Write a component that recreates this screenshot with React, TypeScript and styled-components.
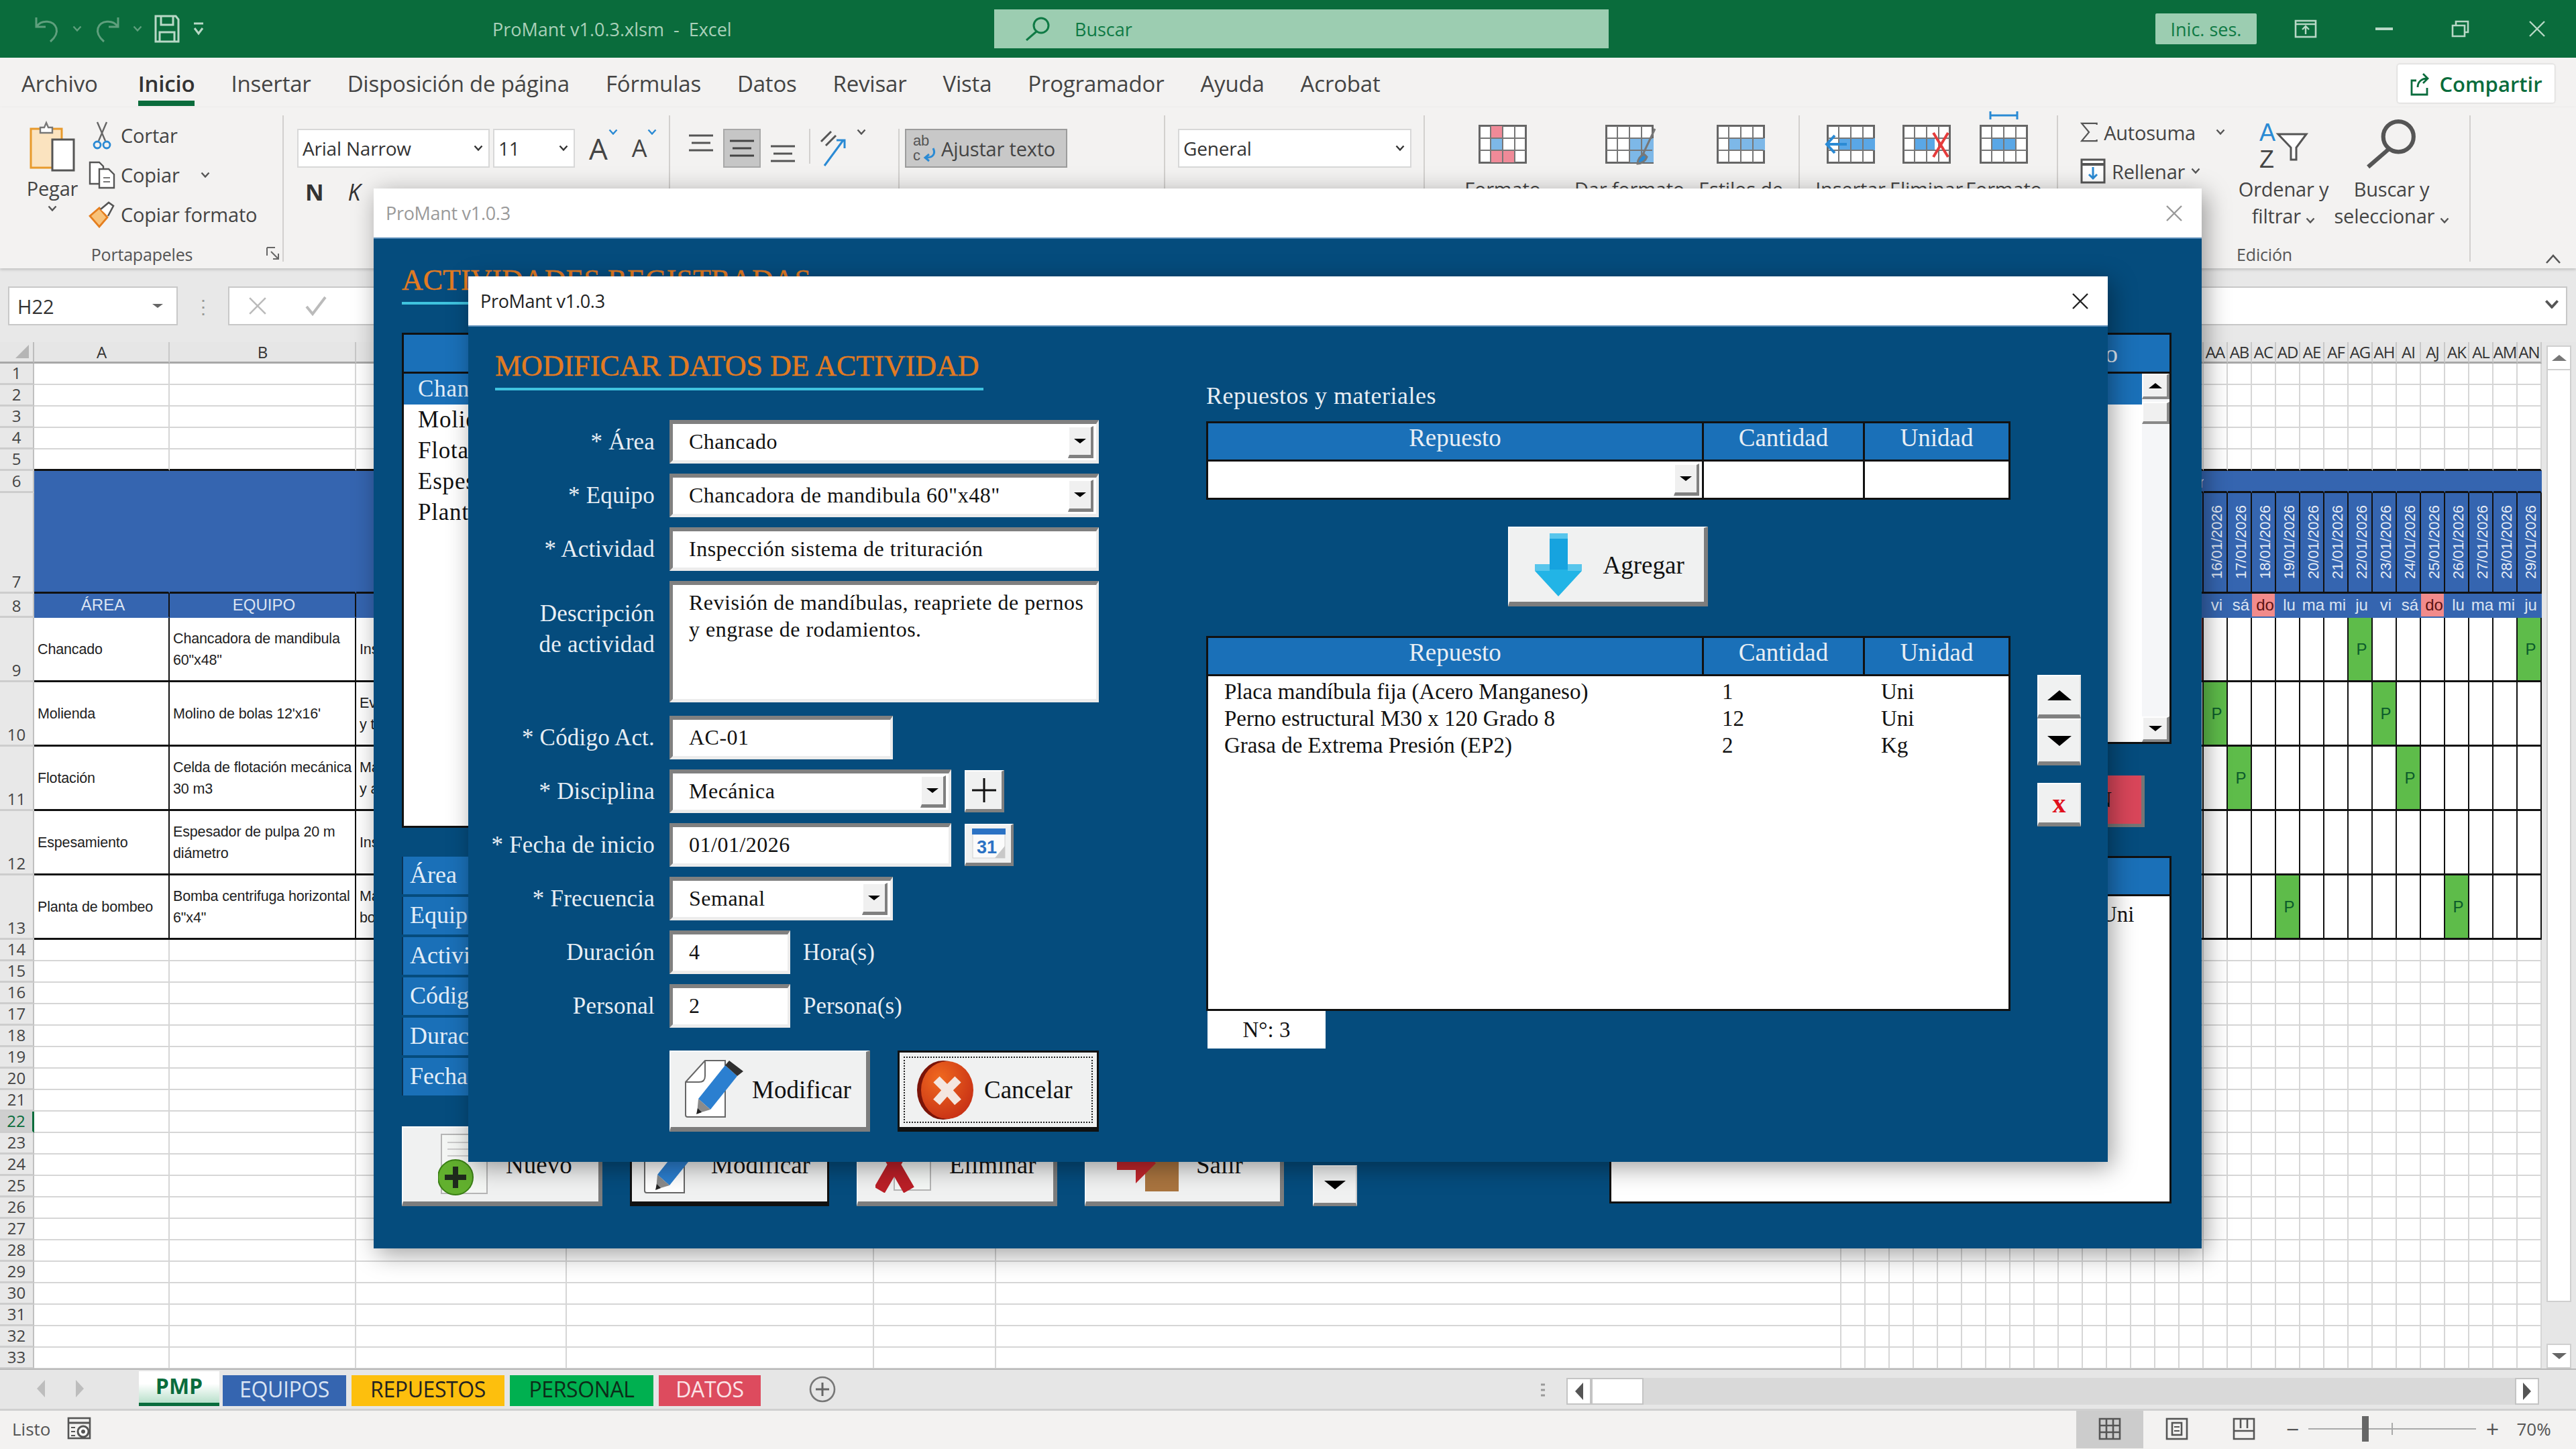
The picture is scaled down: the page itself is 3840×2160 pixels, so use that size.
import React from "react";
import styled, { createGlobalStyle } from "styled-components";

const UI = `"Open Sans", "Noto Sans", sans-serif`;
const SERIF = `"Liberation Serif", "Times New Roman", serif`;
const ARIAL = `"Liberation Sans", Arial, sans-serif`;
const GREEN = "#0a6c3c";
const NAVY = "#054c7d";
const BLUE = "#1a70b8";
const SHEET_BLUE = "#3565b0";
const GRID = "#d6d6d6";
const INK = "#111";

const GlobalStyle = createGlobalStyle`
  html, body { margin: 0; padding: 0; background: #fff; }
  * { box-sizing: border-box; }
`;

const Root = styled.div`
  position: relative;
  width: 3840px;
  height: 2160px;
  overflow: hidden;
  display: flex;
  flex-direction: column;
  font-family: ${UI};
  color: #444;
  background: #f3f2f1;
`;

/* title bar */
const TitleBar = styled.div`
  height: 86px;
  flex: none;
  display: flex;
  align-items: center;
  background: ${GREEN};
  color: #a9d0b9;
`;
const QuickAccess = styled.div`
  width: 734px;
  padding-left: 50px;
  display: flex;
  align-items: center;
  gap: 18px;
`;
const WindowName = styled.div`
  width: 748px;
  font-size: 27px;
  white-space: pre;
`;
const SearchBox = styled.div`
  width: 916px;
  height: 58px;
  background: #9ccdb1;
  color: #0f7a45;
  display: flex;
  align-items: center;
  gap: 36px;
  padding-left: 46px;
  font-size: 27px;
`;
const SignIn = styled.div`
  margin-left: 815px;
  width: 151px;
  height: 46px;
  background: #9ccdb1;
  color: #0f7a45;
  border-radius: 2px;
  font-size: 27px;
  display: flex;
  align-items: center;
  justify-content: center;
`;
const WindowButtons = styled.div`
  display: flex;
  align-items: center;
  margin-left: 56px;
  gap: 87px;
`;

/* menu */
const MenuBar = styled.div`
  height: 74px;
  flex: none;
  display: flex;
  padding-left: 32px;
  gap: 54px;
`;
const MenuTab = styled.div<{ $active?: boolean }>`
  height: 72px;
  padding-top: 17px;
  font-size: 33px;
  line-height: 44px;
  letter-spacing: -0.2px;
  white-space: nowrap;
  color: ${(p) => (p.$active ? "#333" : "#444")};
  font-weight: ${(p) => (p.$active ? 600 : 400)};
  border-bottom: 8px solid ${(p) => (p.$active ? GREEN : "transparent")};
  &:first-child {
    margin-right: 6px;
  }
`;
const ShareButton = styled.div`
  margin: 10px 32px 0 auto;
  width: 234px;
  height: 57px;
  background: #fff;
  border-radius: 3px;
  box-shadow: 0 0 3px rgba(0, 0, 0, 0.25);
  color: ${GREEN};
  font-size: 31px;
  font-weight: 600;
  display: flex;
  align-items: center;
  justify-content: center;
  gap: 10px;
`;

/* ribbon */
const Ribbon = styled.div`
  height: 240px;
  flex: none;
  display: flex;
  font-size: 29px;
  letter-spacing: -0.2px;
  box-shadow: 0 2px 4px rgba(0, 0, 0, 0.18);
  position: relative;
`;
const Group = styled.div<{ $w: number }>`
  width: ${(p) => p.$w}px;
  flex: none;
  position: relative;
  display: flex;
  flex-direction: column;
  &::after {
    content: "";
    position: absolute;
    right: 0;
    top: 12px;
    bottom: 10px;
    width: 2px;
    background: #d2d0ce;
  }
`;
const GroupBody = styled.div<{ $pl?: number; $pt?: number; $gap?: number }>`
  flex: 1;
  min-height: 0;
  display: flex;
  padding-left: ${(p) => p.$pl ?? 0}px;
  padding-top: ${(p) => p.$pt ?? 0}px;
  gap: ${(p) => p.$gap ?? 0}px;
`;
const GroupLabel = styled.div`
  height: 38px;
  margin-bottom: 2px;
  font-size: 25px;
  text-align: center;
  line-height: 38px;
  color: #555;
  position: relative;
`;
const Launcher = styled.span`
  position: absolute;
  right: 6px;
  top: 8px;
  display: flex;
`;
const CollapseSlot = styled.span`
  position: absolute;
  right: 22px;
  top: 218px;
  display: flex;
`;
const PasteColumn = styled.div`
  width: 132px;
  flex: none;
  display: flex;
  flex-direction: column;
  align-items: center;
  padding: 20px 0 0 24px;
  gap: 8px;
  line-height: 34px;
`;
const ClipColumn = styled.div`
  display: flex;
  flex-direction: column;
  padding-top: 12px;
`;
const ClipItem = styled.div`
  height: 59px;
  display: flex;
  align-items: center;
  gap: 8px;
  white-space: nowrap;
`;
const IconSlot = styled.span<{ $w: number }>`
  width: ${(p) => p.$w}px;
  display: flex;
  justify-content: center;
  flex: none;
`;
const FontColumn = styled.div`
  display: flex;
  flex-direction: column;
  padding: 32px 0 0 20px;
`;
const ControlRow = styled.div`
  display: flex;
  align-items: center;
  gap: 5px;
`;
const Combo = styled.div<{ $w: number }>`
  width: ${(p) => p.$w}px;
  height: 58px;
  background: #fff;
  border: 2px solid #d8d8d8;
  padding: 0 8px 0 6px;
  display: flex;
  align-items: center;
  justify-content: space-between;
  color: #333;
  font-size: 28px;
  white-space: nowrap;
`;
const GrowLetter = styled.span<{ $size: number }>`
  font-size: ${(p) => p.$size}px;
  line-height: 58px;
  color: #444;
  margin-left: 16px;
  display: flex;
  align-items: flex-start;
  gap: 1px;
`;
const BoldRow = styled.div`
  display: flex;
  align-items: center;
  gap: 36px;
  padding: 12px 0 0 12px;
  height: 60px;
  font-size: 34px;
  color: #333;
`;
const AlignCell = styled.div<{ $on?: boolean; $w: number; $v?: string }>`
  width: ${(p) => p.$w}px;
  height: 58px;
  display: flex;
  align-items: ${(p) => p.$v ?? "center"};
  justify-content: center;
  padding: 6px 0;
  background: ${(p) => (p.$on ? "#c6c6c6" : "transparent")};
  border: 2px solid ${(p) => (p.$on ? "#a8a8a8" : "transparent")};
`;
const VRule = styled.span<{ $h: number; $ml: number }>`
  width: 2px;
  height: ${(p) => p.$h}px;
  background: #d2d0ce;
  margin-left: ${(p) => p.$ml}px;
`;
const WrapToggle = styled.div`
  width: 242px;
  height: 58px;
  background: #c8c8c8;
  border: 2px solid #9c9c9c;
  color: #444;
  display: flex;
  align-items: center;
  gap: 4px;
  padding-left: 8px;
  white-space: nowrap;
  font-size: 29px;
`;
const BigAction = styled.div<{ $w: number; $mr?: number }>`
  width: ${(p) => p.$w}px;
  margin-right: ${(p) => p.$mr ?? 0}px;
  flex: none;
  display: flex;
  flex-direction: column;
  align-items: center;
`;
const ActionIcon = styled.div<{ $h: number }>`
  height: ${(p) => p.$h}px;
  display: flex;
  align-items: flex-end;
  justify-content: center;
`;
const ActionText = styled.div<{ $mt: number }>`
  margin-top: ${(p) => p.$mt}px;
  text-align: center;
  line-height: 40px;
  white-space: nowrap;
`;
const SumColumn = styled.div`
  width: 270px;
  padding-left: 33px;
  display: flex;
  flex-direction: column;
`;
const SumRow = styled.div`
  height: 58px;
  display: flex;
  align-items: center;
  gap: 9px;
  white-space: nowrap;
`;

/* formula bar */
const FormulaBar = styled.div`
  height: 110px;
  flex: none;
  background: #e8e8e8;
  display: flex;
  align-items: flex-start;
  padding: 27px 0 0 12px;
`;
const NameBox = styled.div`
  width: 253px;
  height: 58px;
  background: #fff;
  border: 2px solid #c8c8c8;
  padding: 0 20px 0 12px;
  display: flex;
  align-items: center;
  justify-content: space-between;
  font-size: 29px;
  color: #333;
`;
const Dots = styled.span`
  width: 75px;
  height: 58px;
  display: flex;
  align-items: center;
  justify-content: center;
  color: #999;
  font-size: 28px;
`;
const FormulaInput = styled.div`
  width: 3487px;
  height: 58px;
  background: #fff;
  border: 2px solid #c8c8c8;
  display: flex;
  align-items: center;
  padding-left: 28px;
  gap: 56px;
  position: relative;
`;
const FormulaDrop = styled.span`
  position: absolute;
  right: 10px;
  top: 17px;
  display: flex;
`;

/* sheet */
const SheetArea = styled.div`
  height: 1530px;
  flex: none;
  display: flex;
  background: #fff;
  overflow: hidden;
`;
const SheetGrid = styled.div`
  width: 3789px;
  flex: none;
  display: grid;
  grid-template-columns: 51px 202px 278px 314px 458px 182px 1260px repeat(29, 36px);
  grid-template-rows: 32px repeat(5, 32px) 33px 150px 36px repeat(5, 96px) repeat(20, 32px);
  font-family: ${ARIAL};
`;
const Corner = styled.div`
  background: #e6e6e6;
  border-right: 2px solid #bdbdbd;
  border-bottom: 3px solid #a8a8a8;
  display: flex;
  align-items: flex-end;
  justify-content: flex-end;
  padding: 0 6px 5px 0;
`;
const ColHead = styled.div`
  background: #e6e6e6;
  border-right: 2px solid #c8c8c8;
  border-bottom: 3px solid #a8a8a8;
  font-family: ${UI};
  font-size: 24px;
  letter-spacing: -1px;
  color: #333;
  display: flex;
  align-items: center;
  justify-content: center;
  overflow: hidden;
`;
const RowHead = styled.div<{ $current?: boolean }>`
  background: ${(p) => (p.$current ? "#cfcfcf" : "#e8e8e8")};
  color: ${(p) => (p.$current ? GREEN : "#444")};
  border-right: ${(p) => (p.$current ? `3px solid ${GREEN}` : "2px solid #c0c0c0")};
  border-bottom: 3px solid #cdcdcd;
  font-family: ${UI};
  font-size: 24px;
  line-height: 30px;
  display: flex;
  align-items: flex-end;
  justify-content: center;
`;
const Cell = styled.div<{ $bg?: string; $rb?: string; $bb?: string; $center?: boolean; $tone?: string }>`
  background: ${(p) => p.$bg ?? "#fff"};
  border-right: 2px solid ${(p) => p.$rb ?? GRID};
  border-bottom: ${(p) => (p.$bb === INK ? "3px" : "2px")} solid ${(p) => p.$bb ?? GRID};
  color: ${(p) => p.$tone ?? "#222"};
  font-size: 21.5px;
  line-height: 32px;
  padding: 0 0 0 5px;
  display: flex;
  align-items: center;
  justify-content: ${(p) => (p.$center ? "center" : "flex-start")};
  min-width: 0;
  position: relative;
`;
const CellText = styled.span`
  display: block;
  white-space: pre;
  letter-spacing: -0.15px;
`;
const MonthText = styled.span`
  position: absolute;
  left: 17px;
  top: 2px;
  white-space: nowrap;
  color: #dbe4f2;
  font-size: 23px;
  line-height: 30px;
`;
const DateText = styled.span`
  writing-mode: vertical-rl;
  transform: rotate(180deg);
  font-size: 22px;
  white-space: nowrap;
  color: #e6ecf6;
`;
const DayText = styled.span`
  font-size: 24px;
  white-space: nowrap;
`;
const VScroll = styled.div`
  width: 51px;
  background: #e6e6e6;
  padding: 5px 7px 0 7px;
  display: flex;
  flex-direction: column;
`;
const ScrollEnd = styled.div`
  height: 37px;
  background: #fff;
  border: 2px solid #cfcfcf;
  display: flex;
  align-items: center;
  justify-content: center;
`;
const ScrollTrack = styled.div`
  height: 1395px;
  background: #fff;
  border-left: 2px solid #cfcfcf;
  border-right: 2px solid #cfcfcf;
  border-bottom: 2px solid #cfcfcf;
`;
const ScrollGap = styled.div`
  height: 62px;
`;

/* sheet tabs */
const TabsBar = styled.div`
  height: 63px;
  flex: none;
  background: #e6e6e6;
  border-top: 2px solid #b8b8b8;
  border-bottom: 3px solid #d0d0d0;
  display: flex;
  align-items: flex-start;
  position: relative;
`;
const TabNav = styled.div`
  width: 207px;
  height: 56px;
  display: flex;
  align-items: center;
  padding-left: 55px;
  gap: 46px;
`;
const SheetTabs = styled.div`
  display: flex;
  gap: 8px;
  align-items: flex-start;
`;
const SheetTab = styled.div<{ $w: number; $bg: string; $tone: string }>`
  width: ${(p) => p.$w}px;
  height: 46px;
  margin-top: 8px;
  padding-bottom: 5px;
  background: ${(p) => p.$bg};
  color: ${(p) => p.$tone};
  font-size: 32px;
  letter-spacing: -0.4px;
  display: flex;
  align-items: center;
  justify-content: center;
  white-space: nowrap;
`;
const ActiveTab = styled.div`
  width: 120px;
  height: 52px;
  margin: 2px -3px 0 0;
  padding-bottom: 4px;
  background: linear-gradient(#fff 40%, #b9e0cb);
  border-bottom: 5px solid ${GREEN};
  color: ${GREEN};
  font-weight: 700;
  font-size: 32px;
  display: flex;
  align-items: center;
  justify-content: center;
`;
const AddSheet = styled.span`
  margin: 9px 0 0 72px;
  display: flex;
`;
const HScroll = styled.div`
  position: absolute;
  left: 2335px;
  top: 12px;
  width: 1450px;
  height: 40px;
  background: #d9d9d9;
  display: flex;
`;
const HScrollButton = styled.div<{ $w: number }>`
  width: ${(p) => p.$w}px;
  height: 40px;
  background: #fff;
  border: 2px solid #c4c4c4;
  display: flex;
  align-items: center;
  justify-content: center;
`;
const HScrollFill = styled.div`
  flex: 1;
`;
const SheetDots = styled.span`
  position: absolute;
  left: 2296px;
  top: 20px;
  display: flex;
`;

/* status bar */
const StatusBar = styled.div`
  height: 57px;
  flex: none;
  display: flex;
  align-items: center;
  padding: 0 0 3px 18px;
  font-size: 26px;
  color: #555;
`;
const ViewButtons = styled.div`
  margin-left: 2932px;
  display: flex;
  height: 57px;
`;
const ViewButton = styled.div<{ $on?: boolean }>`
  width: 100px;
  height: 57px;
  background: ${(p) => (p.$on ? "#cccccc" : "transparent")};
  display: flex;
  align-items: center;
  justify-content: center;
`;
const Zoomer = styled.div`
  display: flex;
  align-items: center;
  margin-left: 10px;
  gap: 12px;
`;
const ZoomSign = styled.span`
  font-size: 34px;
  color: #555;
  width: 24px;
  text-align: center;
`;
const ZoomTrack = styled.div`
  width: 250px;
  height: 2px;
  background: #aaa;
  position: relative;
`;
const ZoomThumb = styled.span`
  position: absolute;
  left: 80px;
  top: -18px;
  width: 10px;
  height: 38px;
  background: #666;
`;
const ZoomTick = styled.span`
  position: absolute;
  left: 124px;
  top: -8px;
  width: 2px;
  height: 18px;
  background: #aaa;
`;
const ZoomValue = styled.span`
  margin-left: 12px;
`;

/* windows */
const Window = styled.div<{ $x: number; $y: number; $w: number; $h: number }>`
  position: absolute;
  left: ${(p) => p.$x}px;
  top: ${(p) => p.$y}px;
  width: ${(p) => p.$w}px;
  height: ${(p) => p.$h}px;
  display: flex;
  flex-direction: column;
  overflow: hidden;
  background: ${NAVY};
  font-family: ${SERIF};
`;
const Shadow = styled.div<{ $x: number; $y: number; $w: number; $h: number }>`
  position: absolute;
  left: ${(p) => p.$x}px;
  top: ${(p) => p.$y}px;
  width: ${(p) => p.$w}px;
  height: ${(p) => p.$h}px;
  box-shadow: 6px 8px 34px rgba(0, 0, 0, 0.38);
`;
const WindowTitle = styled.div<{ $dim?: boolean }>`
  height: 75px;
  flex: none;
  background: #fff;
  border-bottom: 2px solid #5b8db8;
  padding: 0 28px 0 18px;
  display: flex;
  align-items: center;
  justify-content: space-between;
  font-family: ${UI};
  font-size: 27px;
  letter-spacing: -0.3px;
  color: ${(p) => (p.$dim ? "#9a9a9a" : "#222")};
`;
const Heading = styled.div`
  display: inline-block;
  width: fit-content;
  font-family: ${SERIF};
  font-size: 44px;
  line-height: 44px;
  color: #e27b22;
  -webkit-text-stroke: 0.5px #e27b22;
  white-space: nowrap;
  padding: 0 6px 10px 0;
  border-bottom: 4px solid #3fc3df;
`;

/* back window */
const BackBody = styled.div`
  flex: 1;
  padding: 40px 0 0 42px;
  display: flex;
  flex-direction: column;
  width: 2680px;
`;
const BackHeader = styled.div`
  margin-top: 42px;
  height: 61px;
  flex: none;
  background: ${BLUE};
  border: 3px solid ${INK};
  display: flex;
  align-items: center;
  justify-content: space-between;
  padding: 0 77px 0 300px;
  font-size: 38px;
  color: #e3eef8;
`;
const BackColumns = styled.div`
  display: flex;
  width: 2638px;
`;
const BackLeft = styled.div`
  width: 1440px;
  flex: none;
  display: flex;
  flex-direction: column;
`;
const BackRight = styled.div`
  width: 1198px;
  flex: none;
  display: flex;
  flex-direction: column;
`;
const BackList = styled.div`
  height: 677px;
  background: #fff;
  border-left: 3px solid ${INK};
  border-bottom: 3px solid ${INK};
  font-size: 35px;
  letter-spacing: 0.8px;
  color: #111;
`;
const BackListRow = styled.div<{ $on?: boolean }>`
  height: 46px;
  line-height: 46px;
  padding-left: 21px;
  background: ${(p) => (p.$on ? BLUE : "transparent")};
  color: ${(p) => (p.$on ? "#e3eef8" : "#111")};
  white-space: nowrap;
`;
const FieldStack = styled.div`
  margin-top: 43px;
  display: flex;
  flex-direction: column;
  gap: 4px;
`;
const FieldTag = styled.div`
  width: 300px;
  height: 56px;
  background: ${BLUE};
  border-left: 2px solid #0a3356;
  padding-left: 10px;
  line-height: 54px;
  font-size: 36px;
  color: #e3eef8;
`;
const BackButtons = styled.div`
  margin-top: 46px;
  display: flex;
  align-items: flex-end;
  gap: 41px;
`;
const BigButton = styled.button<{ $w: number; $h: number; $focus?: boolean; $gap?: number; $pl?: number }>`
  width: ${(p) => p.$w}px;
  height: ${(p) => p.$h}px;
  flex: none;
  position: relative;
  margin: 0;
  padding: 0 0 0 ${(p) => p.$pl ?? 0}px;
  background: #f0f1f1;
  border-style: solid;
  border-width: ${(p) => (p.$focus ? "3px 3px 7px 3px" : "2px 6px 7px 2px")};
  border-color: ${(p) => (p.$focus ? INK : "#fbfbfb #7d7d7d #7d7d7d #fbfbfb")};
  display: flex;
  align-items: center;
  justify-content: flex-start;
  gap: ${(p) => p.$gap ?? 0}px;
  font-family: ${SERIF};
  font-size: 37px;
  color: #111;
  white-space: nowrap;
`;
const FocusDots = styled.span`
  position: absolute;
  inset: 6px;
  border: 2px dotted #222;
  pointer-events: none;
`;
const BackListRight = styled.div`
  height: 552px;
  display: flex;
  background: #fff;
  border-right: 3px solid ${INK};
  border-bottom: 3px solid ${INK};
  flex: none;
`;
const RightRows = styled.div`
  flex: 1;
`;
const ListScroll = styled.div`
  width: 41px;
  flex: none;
  background: #f5f6f8;
  display: flex;
  flex-direction: column;
  justify-content: space-between;
  position: relative;
`;
const ListScrollBtn = styled.div<{ $thumb?: boolean }>`
  width: 41px;
  height: ${(p) => (p.$thumb ? 33 : 38)}px;
  background: #f0f0f0;
  border-style: solid;
  border-width: 2px 4px 4px 2px;
  border-color: #fff #888 #888 #fff;
  display: flex;
  align-items: center;
  justify-content: center;
`;
const ListScrollTop = styled.div`
  display: flex;
  flex-direction: column;
  gap: 4px;
`;
const RedButton = styled.div`
  margin: 47px 40px 0 auto;
  width: 400px;
  height: 77px;
  background: #d9465a;
  border-right: 5px solid #757575;
  border-bottom: 5px solid #757575;
  display: flex;
  align-items: center;
  justify-content: flex-end;
  font-size: 34px;
  color: #111;
  padding-right: 44px;
  white-space: nowrap;
`;
const DetailBox = styled.div`
  margin: 43px 0 0 auto;
  width: 838px;
  display: flex;
  flex-direction: column;
`;
const DetailHead = styled.div`
  height: 60px;
  background: ${BLUE};
  border: 3px solid ${INK};
`;
const DetailBody = styled.div`
  height: 458px;
  background: #fff;
  border: 3px solid ${INK};
  border-top: none;
  padding: 4px 0 0 730px;
  font-size: 33px;
  line-height: 46px;
  color: #111;
  white-space: nowrap;
`;

/* front window */
const FrontBody = styled.div`
  flex: 1;
  display: flex;
  padding-left: 40px;
`;
const FormSide = styled.div`
  width: 900px;
  flex: none;
  padding-top: 37px;
  display: flex;
  flex-direction: column;
`;
const Form = styled.div`
  margin-top: 44px;
  display: flex;
  flex-direction: column;
  gap: 15px;
`;
const FormRow = styled.div<{ $top?: boolean; $after?: number }>`
  display: flex;
  align-items: ${(p) => (p.$top ? "flex-start" : "center")};
  margin-bottom: ${(p) => p.$after ?? 0}px;
`;
const FieldLabel = styled.div<{ $top?: boolean }>`
  width: 238px;
  flex: none;
  margin-right: 22px;
  padding-top: ${(p) => (p.$top ? 26 : 0)}px;
  text-align: right;
  color: #e8eef4;
  font-size: 35px;
  letter-spacing: 0.2px;
  line-height: 46px;
  white-space: nowrap;
  display: flex;
  flex-direction: column;
  align-items: flex-end;
`;
const Field = styled.div<{ $w: number; $h?: number; $top?: boolean }>`
  width: ${(p) => p.$w}px;
  height: ${(p) => p.$h ?? 65}px;
  flex: none;
  background: #fff;
  border-style: solid;
  border-width: 6px 4px 5px 5px;
  border-color: #808080 #ececec #ececec #808080;
  padding-left: 24px;
  position: relative;
  color: #111;
  font-size: 32px;
  letter-spacing: 0.5px;
  line-height: ${(p) => (p.$top ? "40px" : "52px")};
  padding-top: ${(p) => (p.$top ? 6 : 0)}px;
  white-space: nowrap;
`;
const DropButton = styled.span<{ $w?: number }>`
  position: absolute;
  right: 4px;
  top: 3px;
  width: ${(p) => p.$w ?? 38}px;
  height: 48px;
  background: #f0f0f0;
  border-style: solid;
  border-width: 2px 4px 5px 2px;
  border-color: #fff #808080 #808080 #fff;
  display: flex;
  align-items: center;
  justify-content: center;
`;
const Tri = styled.span<{ $up?: boolean; $size: number; $tone?: string }>`
  display: block;
  width: 0;
  height: 0;
  border-left: ${(p) => p.$size}px solid transparent;
  border-right: ${(p) => p.$size}px solid transparent;
  ${(p) => (p.$up ? "border-bottom" : "border-top")}: ${(p) => p.$size * 0.85}px solid ${(p) => p.$tone ?? "#000"};
`;
const SideTool = styled.div<{ $w: number }>`
  width: ${(p) => p.$w}px;
  height: 63px;
  margin-left: 20px;
  background: #f0f1f1;
  border-style: solid;
  border-width: 2px 4px 5px 2px;
  border-color: #fff #808080 #808080 #fff;
  display: flex;
  align-items: center;
  justify-content: center;
`;
const UnitText = styled.div`
  margin-left: 19px;
  color: #e8eef4;
  font-size: 35px;
  white-space: nowrap;
`;
const FormButtons = styled.div`
  margin: 34px 0 0 260px;
  display: flex;
  gap: 41px;
`;
const PartsSide = styled.div`
  width: 1199px;
  flex: none;
  margin-left: 160px;
  display: flex;
  flex-direction: column;
`;
const PartsTitle = styled.div`
  height: 141px;
  padding-top: 80px;
  line-height: 46px;
  font-size: 36px;
  letter-spacing: 0.5px;
  color: #e8eef4;
  white-space: nowrap;
`;
const PartsGrid = styled.div`
  display: grid;
  grid-template-columns: 736px 237px 1fr;
  gap: 3px;
  background: ${INK};
  border: 3px solid ${INK};
`;
const PartsHead = styled.div`
  height: 54px;
  background: ${BLUE};
  color: #e8eef4;
  font-size: 37px;
  line-height: 44px;
  text-align: center;
`;
const PartsInput = styled.div`
  height: 54px;
  background: #fff;
  position: relative;
`;
const AddRow = styled.div`
  display: flex;
  justify-content: center;
  margin: 40px 0 44px -2px;
`;
const PartsBody = styled.div`
  height: 499px;
  background: #fff;
  border: 3px solid ${INK};
  border-top: none;
  padding-top: 3px;
`;
const PartRow = styled.div`
  display: grid;
  grid-template-columns: 739px 240px 1fr;
  height: 40px;
  line-height: 40px;
  font-size: 33px;
  color: #111;
  white-space: nowrap;
`;
const PartCell = styled.div<{ $pl: number }>`
  padding-left: ${(p) => p.$pl}px;
`;
const CountBox = styled.div`
  width: 176px;
  height: 56px;
  margin-left: 2px;
  background: #fff;
  color: #111;
  font-size: 33px;
  display: flex;
  align-items: center;
  justify-content: center;
`;
const SideTools = styled.div`
  margin-left: 40px;
  padding-top: 519px;
  width: 65px;
  flex: none;
  display: flex;
  flex-direction: column;
`;
const SquareTool = styled.div<{ $h: number; $after?: number }>`
  width: 65px;
  height: ${(p) => p.$h}px;
  margin-bottom: ${(p) => p.$after ?? 0}px;
  background: #f0f1f1;
  border-style: solid;
  border-width: 2px 2px 6px 2px;
  border-color: #fff #e0e0e0 #808080 #fff;
  display: flex;
  align-items: center;
  justify-content: center;
  color: #e0101c;
  font-size: 40px;
  font-weight: 700;
  line-height: 1;
`;
const SmallDrop = styled.div`
  width: 66px;
  height: 61px;
  margin-left: 2px;
  background: #f0f1f1;
  border-style: solid;
  border-width: 2px 2px 5px 2px;
  border-color: #fff #ccc #808080 #fff;
  display: flex;
  align-items: center;
  justify-content: center;
  flex: none;
`;

/* drawings */
const Chevron = ({ tone = "#555", w = 14 }: { tone?: string; w?: number }) => (
  <svg width={w} height={w * 0.65} viewBox="0 0 14 9">
    <path d="M1.5 1.5 7 7.5l5.5-6" fill="none" stroke={tone} strokeWidth="2.4" />
  </svg>
);
const UndoIcon = ({ flip }: { flip?: boolean }) => (
  <svg width="40" height="42" viewBox="0 0 40 42">
    <g transform={flip ? "translate(40 0) scale(-1 1)" : undefined}>
      <path d="M4 4v14h14M5 17C12 7 30 8 34 20c2 7-2 14-9 20" fill="none" stroke="#5f9f7d" strokeWidth="3" />
    </g>
  </svg>
);
const SaveIcon = () => (
  <svg width="38" height="42" viewBox="0 0 38 42">
    <path d="M2 2h30l4 5v33H2zM10 2v13h18V2M8 40V26h22v14" fill="none" stroke="#b8d8c6" strokeWidth="3" />
  </svg>
);
const CustomizeIcon = () => (
  <svg width="20" height="20" viewBox="0 0 20 20">
    <path d="M3 2h14M4 9l6 8 6-8" fill="none" stroke="#b8d8c6" strokeWidth="3" />
  </svg>
);
const LensIcon = ({ tone, w, h }: { tone: string; w: number; h: number }) => (
  <svg width={w} height={h} viewBox="0 0 38 36">
    <circle cx="24" cy="13" r="11" fill="none" stroke={tone} strokeWidth="3" />
    <path d="M17 22 2 35" stroke={tone} strokeWidth="3" />
  </svg>
);
const RibbonToggleIcon = () => (
  <svg width="34" height="28" viewBox="0 0 34 28">
    <rect x="2" y="2" width="30" height="24" fill="none" stroke="#b8d8c6" strokeWidth="2.6" />
    <path d="M2 7h30M17 22V11M12 15l5-5 5 5" fill="none" stroke="#b8d8c6" strokeWidth="2.4" />
  </svg>
);
const RestoreIcon = () => (
  <svg width="28" height="26" viewBox="0 0 28 26">
    <path d="M2 8h18v16H2zM7 8V2h18v16h-5" fill="none" stroke="#b8d8c6" strokeWidth="2.6" />
  </svg>
);
const CloseIcon = ({ tone, s = 26 }: { tone: string; s?: number }) => (
  <svg width={s} height={s} viewBox="0 0 26 26">
    <path d="M2 2l22 22M24 2 2 24" stroke={tone} strokeWidth="2.4" />
  </svg>
);
const ShareIcon = () => (
  <svg width="34" height="38" viewBox="0 0 34 38">
    <path d="M10 14H3v21h23v-10M12 24c0-8 6-13 14-13M20 4l7 7-7 7" fill="none" stroke={GREEN} strokeWidth="2.8" />
  </svg>
);
const PasteIcon = () => (
  <svg width="68" height="76" viewBox="0 0 68 76">
    <rect x="2" y="12" width="46" height="58" fill="#fbe3bf" stroke="#e89a2c" strokeWidth="3" />
    <path d="M16 18v-8h6l3-7 3 7h6v8z" fill="#fff" stroke="#777" strokeWidth="2.4" />
    <rect x="34" y="28" width="32" height="46" fill="#fff" stroke="#555" strokeWidth="3" />
  </svg>
);
const ScissorsIcon = () => (
  <svg width="30" height="44" viewBox="0 0 30 44">
    <path d="M8 2 20 30M22 2 10 30" stroke="#666" strokeWidth="2.4" fill="none" />
    <circle cx="8" cy="36" r="5" fill="none" stroke="#2a8ad4" strokeWidth="2.8" />
    <circle cx="22" cy="36" r="5" fill="none" stroke="#2a8ad4" strokeWidth="2.8" />
  </svg>
);
const CopyIcon = () => (
  <svg width="40" height="42" viewBox="0 0 40 42">
    <path d="M2 2h14l6 6v26H2z" fill="#fff" stroke="#555" strokeWidth="2.4" />
    <path d="M16 12h14l8 8v20H16z" fill="#fff" stroke="#555" strokeWidth="2.4" />
    <path d="M22 25h10M22 31h10" stroke="#777" strokeWidth="2.2" />
  </svg>
);
const BrushIcon = () => (
  <svg width="40" height="40" viewBox="0 0 40 40">
    <path d="M2 22 16 10l12 14-12 14z" fill="#f8c27a" stroke="#e57e1e" strokeWidth="2.8" />
    <path d="M18 12 30 2l7 5-8 15" fill="#fff" stroke="#555" strokeWidth="2.6" />
  </svg>
);
const LauncherIcon = () => (
  <svg width="20" height="20" viewBox="0 0 20 20">
    <path d="M1 1h12M1 1v12M7 7l11 11M18 10v8h-8" fill="none" stroke="#666" strokeWidth="2" />
  </svg>
);
const AlignIcon = ({ tone = "#555" }: { tone?: string }) => (
  <svg width="36" height="26" viewBox="0 0 36 26">
    <path d="M0 2h36M4 13h28M0 24h36" stroke={tone} strokeWidth="3" />
  </svg>
);
const AngleIcon = () => (
  <svg width="42" height="56" viewBox="0 0 42 56">
    <path d="M3 18 18 3M10 24 25 9" stroke="#555" strokeWidth="3" />
    <path d="M8 54 36 16M26 16h12v12" fill="none" stroke="#2a8ad4" strokeWidth="3" />
  </svg>
);
const WrapIcon = () => (
  <svg width="40" height="48" viewBox="0 0 40 48">
    <text x="2" y="20" fontFamily={ARIAL} fontSize="22" fill="#555">ab</text>
    <text x="2" y="42" fontFamily={ARIAL} fontSize="22" fill="#555">c</text>
    <path d="M32 24c4 8 0 14-10 14M26 33l-6 5 6 5" fill="none" stroke="#2a8ad4" strokeWidth="3" />
  </svg>
);
const TableIcon = ({ fills, extra }: { fills: [number, number, number, number, string][]; extra?: React.ReactNode }) => (
  <svg width={72} height={58} viewBox="0 0 72 58" overflow="visible">
    <rect x="1.5" y="1.5" width="69" height="55" fill="#fff" stroke="#666" strokeWidth="3" />
    {fills.map((f, i) => (
      <rect key={i} x={f[0]} y={f[1]} width={f[2]} height={f[3]} fill={f[4]} />
    ))}
    <path d="M18 2v54M36 2v54M54 2v54M2 20h68M2 38h68" stroke="#777" strokeWidth="2" />
    {extra}
  </svg>
);
const SigmaIcon = () => (
  <svg width="36" height="40" viewBox="0 0 36 40">
    <path d="M34 5V2H3l15 18L3 38h31v-3" fill="none" stroke="#555" strokeWidth="3" />
  </svg>
);
const FillIcon = () => (
  <svg width="38" height="38" viewBox="0 0 38 38">
    <rect x="2" y="2" width="34" height="34" fill="#fff" stroke="#555" strokeWidth="3" />
    <path d="M2 9h34" stroke="#555" strokeWidth="4" />
    <path d="M19 13v17M13 24l6 6 6-6" fill="none" stroke="#2a8ad4" strokeWidth="3" />
  </svg>
);
const SortIcon = () => (
  <svg width="76" height="70" viewBox="0 0 76 70">
    <text x="2" y="28" fontFamily={ARIAL} fontSize="36" fill="#2a8ad4">A</text>
    <text x="2" y="68" fontFamily={ARIAL} fontSize="36" fill="#444">Z</text>
    <path d="M30 18h42L57 38v18h-8V38z" fill="#fff" stroke="#555" strokeWidth="3" />
  </svg>
);
const CollapseIcon = () => (
  <svg width="24" height="16" viewBox="0 0 24 16">
    <path d="M2 14 12 3l10 11" fill="none" stroke="#555" strokeWidth="2.6" />
  </svg>
);
const DocPen = () => (
  <svg width="88" height="88" viewBox="0 0 88 88">
    <path d="M1 33 30 1h30v84H4q-3 0-3-3z" fill="#fff" stroke="#666" strokeWidth="2" />
    <path d="M1 33h20q9 0 9-9V1" fill="none" stroke="#666" strokeWidth="2" />
    <path d="M20 58 60 8l18 16-40 50z" fill="#2b7fd0" />
    <path d="M60 8l6-7 21 16-9 7z" fill="#2f2f2f" />
    <path d="M20 58l18 16-20 6z" fill="#8b8b8b" />
    <path d="M19 72l-2 9 8-3z" fill="#222" />
  </svg>
);
const CancelIcon = () => (
  <svg width="86" height="88" viewBox="0 0 86 88">
    <defs>
      <radialGradient id="cancelFill" cx="35%" cy="30%" r="85%">
        <stop offset="0" stopColor="#f0691f" />
        <stop offset="1" stopColor="#c32a14" />
      </radialGradient>
    </defs>
    <ellipse cx="40" cy="44" rx="39" ry="44" fill="#7b1408" />
    <ellipse cx="46" cy="44" rx="39" ry="43" fill="url(#cancelFill)" />
    <path d="M30 28l16 16M62 28 46 44M30 62l16-18M62 62 46 44" stroke="#f4e6df" strokeWidth="13" />
  </svg>
);
const ArrowDownIcon = () => (
  <svg width="70" height="94" viewBox="0 0 70 94">
    <rect x="22" y="0" width="27" height="8" fill="#58c6ec" />
    <rect x="22" y="8" width="27" height="46" fill="#16a3df" />
    <path d="M0 46h22v8h27v-8h21v10L35 94 0 56z" fill="#22b4e6" />
    <path d="M0 46h22v10H0zM49 46h21v10H49z" fill="#58c6ec" />
  </svg>
);
const CalendarIcon = () => (
  <svg width="54" height="50" viewBox="0 0 54 50">
    <rect x="3" y="4" width="48" height="42" fill="#fbfbfb" stroke="#cfcfcf" />
    <rect x="2" y="2" width="50" height="9" fill="#2b72c4" />
    <text x="9" y="39" fontFamily={ARIAL} fontSize="27" fontWeight="700" fill="#2b72c4">31</text>
    <path d="M51 28v18H36z" fill="#c8c8c8" />
  </svg>
);
const NewDocIcon = () => (
  <svg width="75" height="94" viewBox="0 0 75 94">
    <rect x="5" y="2" width="68" height="88" fill="#f4f6f4" stroke="#b5b5b5" strokeWidth="2" />
    <path d="M14 14h50M14 24h50M14 34h50" stroke="#ccc" strokeWidth="2" />
    <circle cx="26" cy="66" r="26" fill="#62b02e" stroke="#3a7f15" strokeWidth="2" />
    <path d="M26 50v32M10 66h32" stroke="#1f2a1d" strokeWidth="8" />
  </svg>
);
const DeleteDocIcon = () => (
  <svg width="84" height="84" viewBox="0 0 84 84">
    <rect x="28" y="2" width="54" height="78" fill="#f5f8f6" stroke="#b5b5b5" strokeWidth="2" />
    <path d="M6 4l44 76M50 4 6 80" stroke="#bb1f27" strokeWidth="18" />
  </svg>
);
const ExitIcon = () => (
  <svg width="98" height="84" viewBox="0 0 98 84">
    <rect x="42" y="14" width="50" height="68" fill="#a9743f" />
    <path d="M0 34h28V10l30 30-30 30V50H0z" fill="#c2262c" />
  </svg>
);
const MacroIcon = () => (
  <svg width="38" height="36" viewBox="0 0 38 36">
    <rect x="2" y="2" width="32" height="30" fill="none" stroke="#555" strokeWidth="2.6" />
    <path d="M2 9h32" stroke="#555" strokeWidth="3" />
    <circle cx="24" cy="22" r="8" fill="#fff" stroke="#555" strokeWidth="3" />
    <circle cx="24" cy="22" r="3" fill="#555" />
    <path d="M6 16h6M6 22h6M6 28h6" stroke="#555" strokeWidth="2" />
  </svg>
);
const GridView = () => (
  <svg width="34" height="34" viewBox="0 0 34 34">
    <path d="M2 2h30v30H2zM2 12h30M2 22h30M12 2v30M22 2v30" fill="none" stroke="#555" strokeWidth="2.6" />
  </svg>
);
const PageView = () => (
  <svg width="34" height="34" viewBox="0 0 34 34">
    <rect x="2" y="2" width="30" height="30" fill="none" stroke="#555" strokeWidth="2.6" />
    <rect x="10" y="8" width="14" height="18" fill="none" stroke="#555" strokeWidth="2.6" />
    <path d="M13 14h8M13 20h8" stroke="#555" strokeWidth="2" />
  </svg>
);
const BreakView = () => (
  <svg width="34" height="34" viewBox="0 0 34 34">
    <path d="M2 20h30v12H2zM2 20V2h30v18M12 2v14M22 2v14" fill="none" stroke="#555" strokeWidth="2.6" />
  </svg>
);
const PlusCircle = () => (
  <svg width="40" height="40" viewBox="0 0 40 40">
    <circle cx="20" cy="20" r="18" fill="none" stroke="#777" strokeWidth="2.6" />
    <path d="M20 10v20M10 20h20" stroke="#666" strokeWidth="3" />
  </svg>
);
const SideTri = ({ left, tone = "#b5b5b5" }: { left?: boolean; tone?: string }) => (
  <svg width="12" height="26" viewBox="0 0 12 26">
    <path d={left ? "M12 0v26L0 13z" : "M0 0v26l12-13z"} fill={tone} />
  </svg>
);
const PlusGlyph = () => (
  <svg width="38" height="38" viewBox="0 0 38 38">
    <path d="M19 1v36M1 19h36" stroke="#111" strokeWidth="3" />
  </svg>
);

/* data */
const COLUMN_NAMES = ["A", "B", "C", "D", "E", "K"];
for (let i = 11; i < 40; i++) {
  COLUMN_NAMES.push(i < 26 ? String.fromCharCode(65 + i) : "A" + String.fromCharCode(39 + i));
}
const DAYS = ["vi", "sá", "do", "lu", "ma", "mi", "ju"];
const FIRST_DATE_COL = 21; // AA = 16/01/2026
const HEAD_LABELS = ["ÁREA", "EQUIPO", "ACTIVIDAD"];
const TABLE_ROWS: string[][] = [
  ["Chancado", "Chancadora de mandibula\n60\"x48\"", "Inspección sistema trituración"],
  ["Molienda", "Molino de bolas 12'x16'", "Evaluación de revestimientos\ny transmisión"],
  ["Flotación", "Celda de flotación mecánica\n30 m3", "Mantenimiento de celdas\ny agitador"],
  ["Espesamiento", "Espesador de pulpa 20 m\ndiámetro", "Inspección de rastras"],
  ["Planta de bombeo", "Bomba centrifuga horizontal\n6\"x4\"", "Mantenimiento de\nbomba de pulpa"],
];
const PLAN: Record<number, number[]> = { 9: [6, 13], 10: [0, 7], 11: [1, 8], 12: [], 13: [3, 10] };

function sheetCell(row: number, col: number) {
  const key = `${row}-${col}`;
  const small = col >= 6;
  const dated = col - FIRST_DATE_COL;
  if (row <= 4) return <Cell key={key} />;
  if (row === 5) return <Cell key={key} $bb={INK} />;
  if (row === 6) {
    return (
      <Cell key={key} $bg={SHEET_BLUE} $rb={SHEET_BLUE} $bb={small ? INK : SHEET_BLUE}>
        {col === 20 && <MonthText>ene-26</MonthText>}
      </Cell>
    );
  }
  if (row === 7) {
    return (
      <Cell key={key} $bg={SHEET_BLUE} $rb={small ? INK : SHEET_BLUE} $bb={INK} $center>
        {small && dated >= 0 && <DateText>{`${16 + dated}/01/2026`}</DateText>}
      </Cell>
    );
  }
  if (row === 8) {
    if (small) {
      const label = dated >= 0 ? DAYS[dated % 7] : "";
      const sunday = label === "do";
      return (
        <Cell key={key} $bg={sunday ? "#f28b8b" : SHEET_BLUE} $rb={SHEET_BLUE} $bb={SHEET_BLUE} $center $tone={sunday ? "#5b1212" : "#dbe4f2"}>
          <DayText>{label}</DayText>
        </Cell>
      );
    }
    return (
      <Cell key={key} $bg={SHEET_BLUE} $rb={INK} $bb={SHEET_BLUE} $center $tone="#dbe4f2">
        <DayText>{HEAD_LABELS[col]}</DayText>
      </Cell>
    );
  }
  if (row <= 13) {
    const data = TABLE_ROWS[row - 9];
    if (small) {
      const planned = dated >= 0 && PLAN[row].includes(dated);
      const overdue = row === 9 && col === 20;
      return (
        <Cell key={key} $rb={INK} $bb={INK} $center $bg={overdue ? "#c0392b" : planned ? "#5ebc4a" : "#fff"} $tone="#0b5b2b">
          {planned && <DayText>P</DayText>}
        </Cell>
      );
    }
    return (
      <Cell key={key} $rb={INK} $bb={INK}>
        <CellText>{data[col]}</CellText>
      </Cell>
    );
  }
  return <Cell key={key} />;
}

const ROW_NUMBERS = Array.from({ length: 33 }, (_, i) => i + 1);

function Sheet() {
  return (
    <SheetGrid>
      <Corner>
        <svg width="20" height="20" viewBox="0 0 20 20">
          <path d="M20 0v20H0z" fill="#b5b5b5" />
        </svg>
      </Corner>
      {COLUMN_NAMES.map((c) => (
        <ColHead key={c}>{c}</ColHead>
      ))}
      {ROW_NUMBERS.map((r) => (
        <React.Fragment key={r}>
          <RowHead $current={r === 22}>{r}</RowHead>
          {COLUMN_NAMES.map((_, c) => sheetCell(r, c))}
        </React.Fragment>
      ))}
    </SheetGrid>
  );
}

function TopChrome() {
  const tabs = ["Archivo", "Inicio", "Insertar", "Disposición de página", "Fórmulas", "Datos", "Revisar", "Vista", "Programador", "Ayuda", "Acrobat"];
  return (
    <>
      <TitleBar>
        <QuickAccess>
          <UndoIcon />
          <Chevron tone="#5f9f7d" />
          <UndoIcon flip />
          <Chevron tone="#5f9f7d" />
          <SaveIcon />
          <CustomizeIcon />
        </QuickAccess>
        <WindowName>{"ProMant v1.0.3.xlsm  -  Excel"}</WindowName>
        <SearchBox>
          <LensIcon tone="#0f7a45" w={38} h={36} />
          Buscar
        </SearchBox>
        <SignIn>Inic. ses.</SignIn>
        <WindowButtons>
          <RibbonToggleIcon />
          <svg width="26" height="4" viewBox="0 0 26 4">
            <rect width="26" height="4" fill="#b8d8c6" />
          </svg>
          <RestoreIcon />
          <CloseIcon tone="#b8d8c6" />
        </WindowButtons>
      </TitleBar>
      <MenuBar>
        {tabs.map((t) => (
          <MenuTab key={t} $active={t === "Inicio"}>
            {t}
          </MenuTab>
        ))}
        <ShareButton>
          <ShareIcon />
          Compartir
        </ShareButton>
      </MenuBar>
      <Ribbon>
        <Group $w={423}>
          <GroupBody>
            <PasteColumn>
              <PasteIcon />
              Pegar
              <Chevron />
            </PasteColumn>
            <ClipColumn>
              <ClipItem>
                <IconSlot $w={40}><ScissorsIcon /></IconSlot>Cortar
              </ClipItem>
              <ClipItem>
                <IconSlot $w={40}><CopyIcon /></IconSlot>Copiar
                <IconSlot $w={60}><Chevron /></IconSlot>
              </ClipItem>
              <ClipItem>
                <IconSlot $w={40}><BrushIcon /></IconSlot>Copiar formato
              </ClipItem>
            </ClipColumn>
          </GroupBody>
          <GroupLabel>
            Portapapeles
            <Launcher><LauncherIcon /></Launcher>
          </GroupLabel>
        </Group>
        <Group $w={576}>
          <GroupBody>
            <FontColumn>
              <ControlRow>
                <Combo $w={287}>Arial Narrow<Chevron tone="#333" /></Combo>
                <Combo $w={122}>11<Chevron tone="#333" /></Combo>
                <GrowLetter $size={44}>A<Chevron tone="#2a8ad4" /></GrowLetter>
                <GrowLetter $size={36}>A<Chevron tone="#2a8ad4" /></GrowLetter>
              </ControlRow>
              <BoldRow>
                <b>N</b>
                <i>K</i>
              </BoldRow>
            </FontColumn>
          </GroupBody>
        </Group>
        <Group $w={738}>
          <GroupBody $pl={21} $pt={32} $gap={8}>
            <AlignCell $w={50} $v="flex-start"><AlignIcon /></AlignCell>
            <AlignCell $w={56} $on><AlignIcon tone="#444" /></AlignCell>
            <AlignCell $w={50} $v="flex-end"><AlignIcon /></AlignCell>
            <VRule $h={52} $ml={6} />
            <AlignCell $w={52}><AngleIcon /></AlignCell>
            <IconSlot $w={16}><Chevron /></IconSlot>
            <VRule $h={190} $ml={39} />
            <WrapToggle>
              <WrapIcon />
              Ajustar texto
            </WrapToggle>
          </GroupBody>
        </Group>
        <Group $w={387}>
          <GroupBody $pl={19} $pt={32}>
            <Combo $w={348}>General<Chevron tone="#333" /></Combo>
          </GroupBody>
        </Group>
        <Group $w={559}>
          <GroupBody $pl={61} $pt={24}>
            <BigAction $w={110} $mr={53}>
              <ActionIcon $h={60}>
                <TableIcon fills={[[18, 2, 18, 18, "#f08a98"], [18, 20, 18, 18, "#7db8e8"], [18, 38, 36, 18, "#f08a98"]]} />
              </ActionIcon>
              <ActionText $mt={18}>
                Formato
                <br />
                condicional
              </ActionText>
            </BigAction>
            <BigAction $w={162} $mr={20}>
              <ActionIcon $h={60}>
                <TableIcon
                  fills={[[36, 20, 36, 36, "#7db8e8"]]}
                  extra={<path d="M74 6 56 44M58 44c-6 2-10 8-10 14 6 0 12-4 14-10z" stroke="#777" strokeWidth="3" fill="#2a8ad4" />}
                />
              </ActionIcon>
              <ActionText $mt={18}>
                Dar formato
                <br />
                como tabla
              </ActionText>
            </BigAction>
            <BigAction $w={130}>
              <ActionIcon $h={60}>
                <TableIcon fills={[[18, 20, 54, 18, "#7db8e8"]]} />
              </ActionIcon>
              <ActionText $mt={18}>
                Estilos de
                <br />
                celda
              </ActionText>
            </BigAction>
          </GroupBody>
        </Group>
        <Group $w={385}>
          <GroupBody $pl={23} $pt={24} $gap={8}>
            <BigAction $w={105}>
              <ActionIcon $h={60}>
                <TableIcon fills={[[18, 20, 54, 18, "#5aa7e6"]]} extra={<path d="M0 29h30M12 16 0 29l12 13" stroke="#2a8ad4" strokeWidth="4" fill="none" />} />
              </ActionIcon>
              <ActionText $mt={18}>Insertar</ActionText>
            </BigAction>
            <BigAction $w={105}>
              <ActionIcon $h={60}>
                <TableIcon fills={[[18, 20, 30, 18, "#5aa7e6"]]} extra={<path d="M46 12l22 36M68 12 46 48" stroke="#e53c3c" strokeWidth="4" />} />
              </ActionIcon>
              <ActionText $mt={18}>Eliminar</ActionText>
            </BigAction>
            <BigAction $w={110}>
              <ActionIcon $h={60}>
                <TableIcon fills={[[18, 20, 36, 18, "#5aa7e6"]]} extra={<path d="M16-14h40M16-20v12M56-20v12" stroke="#2a8ad4" strokeWidth="3" fill="none" />} />
              </ActionIcon>
              <ActionText $mt={18}>Formato</ActionText>
            </BigAction>
          </GroupBody>
        </Group>
        <Group $w={615}>
          <GroupBody $pt={8}>
            <SumColumn>
              <SumRow>
                <SigmaIcon />
                Autosuma
                <IconSlot $w={56}><Chevron /></IconSlot>
              </SumRow>
              <SumRow>
                <FillIcon />
                Rellenar
                <Chevron />
              </SumRow>
            </SumColumn>
            <BigAction $w={132}>
              <ActionIcon $h={84}><SortIcon /></ActionIcon>
              <ActionText $mt={10}>
                Ordenar y
                <br />
                filtrar <Chevron />
              </ActionText>
            </BigAction>
            <BigAction $w={190}>
              <ActionIcon $h={84}><LensIcon tone="#555" w={78} h={76} /></ActionIcon>
              <ActionText $mt={10}>
                Buscar y
                <br />
                seleccionar <Chevron />
              </ActionText>
            </BigAction>
          </GroupBody>
          <GroupLabel>Edición</GroupLabel>
        </Group>
        <CollapseSlot>
          <CollapseIcon />
        </CollapseSlot>
      </Ribbon>
      <FormulaBar>
        <NameBox>
          H22
          <Tri $size={8} $tone="#666" />
        </NameBox>
        <Dots>⋮</Dots>
        <FormulaInput>
          <CloseIcon tone="#bbb" s={28} />
          <svg width="34" height="30" viewBox="0 0 34 30">
            <path d="M3 16l9 11L31 2" fill="none" stroke="#bbb" strokeWidth="4" />
          </svg>
          <FormulaDrop><Chevron tone="#555" w={22} /></FormulaDrop>
        </FormulaInput>
      </FormulaBar>
    </>
  );
}

function BottomChrome() {
  return (
    <>
      <TabsBar>
        <TabNav>
          <SideTri left tone="#bdbdbd" />
          <SideTri tone="#bdbdbd" />
        </TabNav>
        <SheetTabs>
          <ActiveTab>PMP</ActiveTab>
          <SheetTab $w={184} $bg={SHEET_BLUE} $tone="#d8e3f3">EQUIPOS</SheetTab>
          <SheetTab $w={228} $bg="#fdbf0d" $tone="#222">REPUESTOS</SheetTab>
          <SheetTab $w={214} $bg="#00b050" $tone="#0c2c18">PERSONAL</SheetTab>
          <SheetTab $w={152} $bg="#dd4b5e" $tone="#fbe3e6">DATOS</SheetTab>
        </SheetTabs>
        <AddSheet><PlusCircle /></AddSheet>
        <SheetDots>
          <svg width="8" height="24" viewBox="0 0 8 24">
            <path d="M1 2h6M1 10h6M1 18h6" stroke="#999" strokeWidth="3" />
          </svg>
        </SheetDots>
        <HScroll>
          <HScrollButton $w={37}><SideTri left tone="#555" /></HScrollButton>
          <HScrollButton $w={78} />
          <HScrollFill />
          <HScrollButton $w={36}><SideTri tone="#555" /></HScrollButton>
        </HScroll>
      </TabsBar>
      <StatusBar>
        Listo
        <IconSlot $w={88}><MacroIcon /></IconSlot>
        <ViewButtons>
          <ViewButton $on><GridView /></ViewButton>
          <ViewButton><PageView /></ViewButton>
          <ViewButton><BreakView /></ViewButton>
        </ViewButtons>
        <Zoomer>
          <ZoomSign>−</ZoomSign>
          <ZoomTrack>
            <ZoomThumb />
            <ZoomTick />
          </ZoomTrack>
          <ZoomSign>+</ZoomSign>
          <ZoomValue>70%</ZoomValue>
        </Zoomer>
      </StatusBar>
    </>
  );
}

function BackWindow() {
  return (
    <Window $x={557} $y={281} $w={2725} $h={1580}>
      <WindowTitle $dim>
        ProMant v1.0.3
        <CloseIcon tone="#999" />
      </WindowTitle>
      <BackBody>
        <Heading>ACTIVIDADES REGISTRADAS</Heading>
        <BackHeader>
          <span>Área</span>
          <span>Tiempo</span>
        </BackHeader>
        <BackColumns>
          <BackLeft>
            <BackList>
              <BackListRow $on>Chancado</BackListRow>
              <BackListRow>Molienda</BackListRow>
              <BackListRow>Flotación</BackListRow>
              <BackListRow>Espesamiento</BackListRow>
              <BackListRow>Planta de bombeo</BackListRow>
            </BackList>
            <FieldStack>
              {["Área", "Equipo", "Actividad", "Código", "Duración", "Fecha"].map((f) => (
                <FieldTag key={f}>{f}</FieldTag>
              ))}
            </FieldStack>
            <BackButtons>
              <BigButton $w={299} $h={119} $pl={52} $gap={26}>
                <NewDocIcon />
                Nuevo
              </BigButton>
              <BigButton $w={297} $h={119} $pl={18} $gap={12} $focus>
                <DocPen />
                Modificar
              </BigButton>
              <BigButton $w={299} $h={119} $pl={26} $gap={26}>
                <DeleteDocIcon />
                Eliminar
              </BigButton>
              <BigButton $w={297} $h={119} $pl={46} $gap={20}>
                <ExitIcon />
                Salir
              </BigButton>
              <SmallDrop><Tri $size={16} /></SmallDrop>
            </BackButtons>
          </BackLeft>
          <BackRight>
            <BackListRight>
              <RightRows>
                <BackListRow $on />
              </RightRows>
              <ListScroll>
                <ListScrollTop>
                  <ListScrollBtn><Tri $up $size={10} /></ListScrollBtn>
                  <ListScrollBtn $thumb />
                </ListScrollTop>
                <ListScrollBtn><Tri $size={10} /></ListScrollBtn>
              </ListScroll>
            </BackListRight>
            <RedButton>PLANIFICACIÓN</RedButton>
            <DetailBox>
              <DetailHead />
              <DetailBody>Uni</DetailBody>
            </DetailBox>
          </BackRight>
        </BackColumns>
      </BackBody>
    </Window>
  );
}

const PARTS = [
  { name: "Placa mandíbula fija (Acero Manganeso)", qty: "1", unit: "Uni" },
  { name: "Perno estructural M30 x 120 Grado 8", qty: "12", unit: "Uni" },
  { name: "Grasa de Extrema Presión (EP2)", qty: "2", unit: "Kg" },
];

function FrontWindow() {
  return (
    <Window $x={698} $y={412} $w={2444} $h={1320}>
      <WindowTitle>
        ProMant v1.0.3
        <CloseIcon tone="#222" />
      </WindowTitle>
      <FrontBody>
        <FormSide>
          <Heading>MODIFICAR DATOS DE ACTIVIDAD</Heading>
          <Form>
            <FormRow>
              <FieldLabel>* Área</FieldLabel>
              <Field $w={640}>Chancado<DropButton><Tri $size={9} /></DropButton></Field>
            </FormRow>
            <FormRow>
              <FieldLabel>* Equipo</FieldLabel>
              <Field $w={640}>Chancadora de mandibula 60"x48"<DropButton><Tri $size={9} /></DropButton></Field>
            </FormRow>
            <FormRow>
              <FieldLabel>* Actividad</FieldLabel>
              <Field $w={640}>Inspección sistema de trituración</Field>
            </FormRow>
            <FormRow $top $after={5}>
              <FieldLabel $top>
                <span>Descripción</span>
                <span>de actividad</span>
              </FieldLabel>
              <Field $w={640} $h={181} $top>
                Revisión de mandíbulas, reapriete de pernos
                <br />
                y engrase de rodamientos.
              </Field>
            </FormRow>
            <FormRow>
              <FieldLabel>* Código Act.</FieldLabel>
              <Field $w={333}>AC-01</Field>
            </FormRow>
            <FormRow>
              <FieldLabel>* Disciplina</FieldLabel>
              <Field $w={420}>Mecánica<DropButton><Tri $size={9} /></DropButton></Field>
              <SideTool $w={59}><PlusGlyph /></SideTool>
            </FormRow>
            <FormRow>
              <FieldLabel>* Fecha de inicio</FieldLabel>
              <Field $w={420}>01/01/2026</Field>
              <SideTool $w={73}><CalendarIcon /></SideTool>
            </FormRow>
            <FormRow>
              <FieldLabel>* Frecuencia</FieldLabel>
              <Field $w={333}>Semanal<DropButton><Tri $size={9} /></DropButton></Field>
            </FormRow>
            <FormRow>
              <FieldLabel>Duración</FieldLabel>
              <Field $w={180}>4</Field>
              <UnitText>Hora(s)</UnitText>
            </FormRow>
            <FormRow>
              <FieldLabel>Personal</FieldLabel>
              <Field $w={180}>2</Field>
              <UnitText>Persona(s)</UnitText>
            </FormRow>
          </Form>
          <FormButtons>
            <BigButton $w={299} $h={121} $pl={21} $gap={12}>
              <DocPen />
              Modificar
            </BigButton>
            <BigButton $w={300} $h={121} $pl={25} $gap={15} $focus>
              <FocusDots />
              <CancelIcon />
              Cancelar
            </BigButton>
          </FormButtons>
        </FormSide>
        <PartsSide>
          <PartsTitle>Repuestos y materiales</PartsTitle>
          <PartsGrid>
            <PartsHead>Repuesto</PartsHead>
            <PartsHead>Cantidad</PartsHead>
            <PartsHead>Unidad</PartsHead>
            <PartsInput>
              <DropButton $w={38}><Tri $size={9} /></DropButton>
            </PartsInput>
            <PartsInput />
            <PartsInput />
          </PartsGrid>
          <AddRow>
            <BigButton $w={298} $h={119} $pl={38} $gap={32}>
              <ArrowDownIcon />
              Agregar
            </BigButton>
          </AddRow>
          <PartsGrid>
            <PartsHead>Repuesto</PartsHead>
            <PartsHead>Cantidad</PartsHead>
            <PartsHead>Unidad</PartsHead>
          </PartsGrid>
          <PartsBody>
            {PARTS.map((p) => (
              <PartRow key={p.name}>
                <PartCell $pl={24}>{p.name}</PartCell>
                <PartCell $pl={27}>{p.qty}</PartCell>
                <PartCell $pl={24}>{p.unit}</PartCell>
              </PartRow>
            ))}
          </PartsBody>
          <CountBox>N°: 3</CountBox>
        </PartsSide>
        <SideTools>
          <SquareTool $h={65}><Tri $up $size={18} /></SquareTool>
          <SquareTool $h={70} $after={26}><Tri $size={18} /></SquareTool>
          <SquareTool $h={65}>x</SquareTool>
        </SideTools>
      </FrontBody>
    </Window>
  );
}

export default function App() {
  return (
    <Root>
      <GlobalStyle />
      <TopChrome />
      <SheetArea>
        <Sheet />
        <VScroll>
          <ScrollEnd><Tri $up $size={11} $tone="#777" /></ScrollEnd>
          <ScrollTrack />
          <ScrollGap />
          <ScrollEnd><Tri $size={11} $tone="#666" /></ScrollEnd>
        </VScroll>
      </SheetArea>
      <BottomChrome />
      <Shadow $x={557} $y={281} $w={2725} $h={1580} />
      <BackWindow />
      <Shadow $x={698} $y={412} $w={2444} $h={1320} />
      <FrontWindow />
    </Root>
  );
}
